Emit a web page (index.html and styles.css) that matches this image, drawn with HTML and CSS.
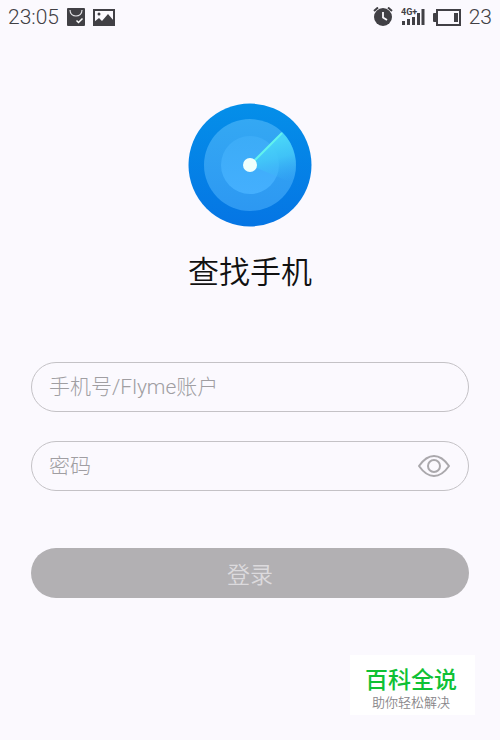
FILE: index.html
```
<!DOCTYPE html>
<html lang="zh-CN">

<head>
    <meta charset="UTF-8">
    <meta name="viewport" content="width=device-width, initial-scale=1.0">
    <title>查找手机</title>
    <link rel="stylesheet" href="styles.css">
</head>

<body>
    <header class="status">
        <div class="status-left">
            <span>23:05</span>
            <svg width="18" height="18" viewBox="0 0 18 18">
                <rect width="18" height="18" rx="1" fill="#414045" />
                <path d="M3 2c0 8 12 8 12 0" fill="none" stroke="#e4e3e8" stroke-width="1.200" />
                <path d="M9.500 12.500l2 2 4-4" fill="none" stroke="#fff" stroke-width="1.500" />
            </svg>
            <svg width="22" height="17" viewBox="0 0 22 17">
                <rect x="1" y="1" width="20" height="15" fill="#fbf9fe" stroke="#414045" stroke-width="2" />
                <path d="M1 16v-3l5-4 3 3 6-7 6 7v4z" fill="#414045" />
                <circle cx="6" cy="5" r="1.500" fill="#414045" />
            </svg>
        </div>
        <div class="status-right">
            <svg width="20" height="20" viewBox="0 0 20 20">
                <circle cx="10" cy="10" r="9" fill="#414045" />
                <path d="M1 4l4-3.500M19 4l-4-3.500" stroke="#414045" stroke-width="2" />
                <path d="M10 5v5.500l4 2.500" fill="none" stroke="#fbf9fe" stroke-width="1.800" />
            </svg>
            <svg width="24" height="20" viewBox="0 0 24 20">
                <path d="M2.500 18v-4M7.500 18v-6M12.500 18v-8M17.500 18V6M22 18V2" stroke="#414045" stroke-width="3" />
                <text class="net" x="0" y="8">4G+</text>
            </svg>
            <svg width="28" height="17" viewBox="0 0 28 17">
                <rect x="4" y="1" width="23" height="15" fill="none" stroke="#414045" stroke-width="2" />
                <rect x="0" y="4" width="4" height="9" rx="1" fill="#414045" />
                <rect x="21" y="4" width="4" height="9" fill="#414045" />
            </svg>
            <span>23</span>
        </div>
    </header>

    <main class="login">
        <svg class="logo" width="124" height="124" viewBox="0 0 124 124">
            <defs>
                <linearGradient id="outer" x1="0" y1="0" x2="0" y2="1">
                    <stop offset="0" stop-color="#048fe9" />
                    <stop offset="1" stop-color="#0575e4" />
                </linearGradient>
                <linearGradient id="middle" x1="0" y1="0" x2="0" y2="1">
                    <stop offset="0" stop-color="#34a8f3" />
                    <stop offset="1" stop-color="#2d98f2" />
                </linearGradient>
                <linearGradient id="inner" x1="0" y1="0" x2="0" y2="1">
                    <stop offset="0" stop-color="#3cacf7" />
                    <stop offset="1" stop-color="#44affe" />
                </linearGradient>
                <linearGradient id="scan" gradientUnits="userSpaceOnUse" x1="86" y1="38" x2="96" y2="80">
                    <stop offset="0" stop-color="#48d4f8" />
                    <stop offset="0.400" stop-color="#42c8f8" stop-opacity="0.850" />
                    <stop offset="1" stop-color="#38aef6" stop-opacity="0" />
                </linearGradient>
            </defs>
            <circle cx="62" cy="62" r="61.500" fill="url(#outer)" />
            <circle cx="62" cy="62" r="46" fill="url(#middle)" />
            <circle cx="62" cy="62" r="29" fill="url(#inner)" />
            <path d="M62 62L94 29A46 46 0 0 1 104 80z" fill="url(#scan)" />
            <path d="M62 62L94 30" stroke="#62f3ee" stroke-width="2" />
            <circle cx="62" cy="62" r="7" fill="#f0fffc" />
        </svg>
        <h1 class="title">查找手机</h1>

        <form class="form">
            <label class="field">
                <input type="text" placeholder="手机号/Flyme账户" aria-label="手机号/Flyme账户">
            </label>
            <div class="field">
                <input type="password" placeholder="密码" aria-label="密码">
                <button class="eye" type="button" aria-label="显示密码">
                    <svg width="34" height="24" viewBox="0 0 34 24">
                        <path d="M2 12Q9 2 17 2T32 12Q25 22 17 22T2 12z" fill="none" stroke="#aaa8ac" stroke-width="2" stroke-linejoin="round" />
                        <circle cx="17" cy="12" r="6" fill="none" stroke="#aaa8ac" stroke-width="2" />
                    </svg>
                </button>
            </div>
            <button class="submit" type="button">登录</button>
        </form>
    </main>

    <aside class="badge">
        <strong>百科全说</strong>
        <span>助你轻松解决</span>
    </aside>
</body>

</html>
```
FILE: styles.css
```
* {
    margin: 0;
    padding: 0;
    box-sizing: border-box;
}

body {
    min-height: 100vh;
    background-color: #fbf9fe;
    font-family: Roboto, "Noto Sans CJK SC", sans-serif;
    font-weight: 300;
    color: #111;
}

svg {
    display: block;
}

.status {
    display: flex;
    justify-content: space-between;
    height: 34px;
    padding: 0 8px;
    font-size: 21px;
    line-height: 34px;
    color: #414045;
}

.status-left,
.status-right {
    display: flex;
    align-items: center;
    gap: 8px;
}

.net {
    font-family: Roboto, sans-serif;
    font-size: 9px;
    font-weight: 700;
    fill: #414045;
}

.login {
    display: flex;
    flex-direction: column;
    align-items: center;
    padding: 69px 31px 0;
}

.title {
    margin-top: 23px;
    font-size: 31px;
    font-weight: 350;
    line-height: 46px;
}

.form {
    width: 100%;
    margin-top: 66px;
}

.field {
    display: flex;
    align-items: center;
    height: 50px;
    margin-bottom: 29px;
    padding: 0 17px;
    border: 1px solid #c4c2c6;
    border-radius: 25px;
}

.field input {
    flex: 1;
    min-width: 0;
    height: 48px;
    border: 0;
    outline: 0;
    background: none;
    font: inherit;
    font-size: 21px;
}

.field input::placeholder {
    color: #a09ea2;
    opacity: 1;
}

.eye {
    border: 0;
    background: none;
    cursor: pointer;
}

.submit {
    display: block;
    width: 100%;
    height: 50px;
    margin-top: 57px;
    border: 0;
    border-radius: 25px;
    background-color: #b2b0b3;
    font: inherit;
    font-size: 23px;
    font-weight: 350;
    color: #dcdadd;
    cursor: pointer;
}

/* stays above the page in the corner */
.badge {
    position: fixed;
    right: 25px;
    bottom: 25px;
    padding: 11px 18px 5px 15px;
    background-color: #fff;
    text-align: center;
}

.badge strong,
.badge span {
    display: block;
}

.badge strong {
    font-size: 23px;
    font-weight: 500;
    line-height: 30px;
    color: #0fc135;
}

.badge span {
    font-size: 13px;
    font-weight: 350;
    line-height: 14px;
    color: #88868a;
}
```
